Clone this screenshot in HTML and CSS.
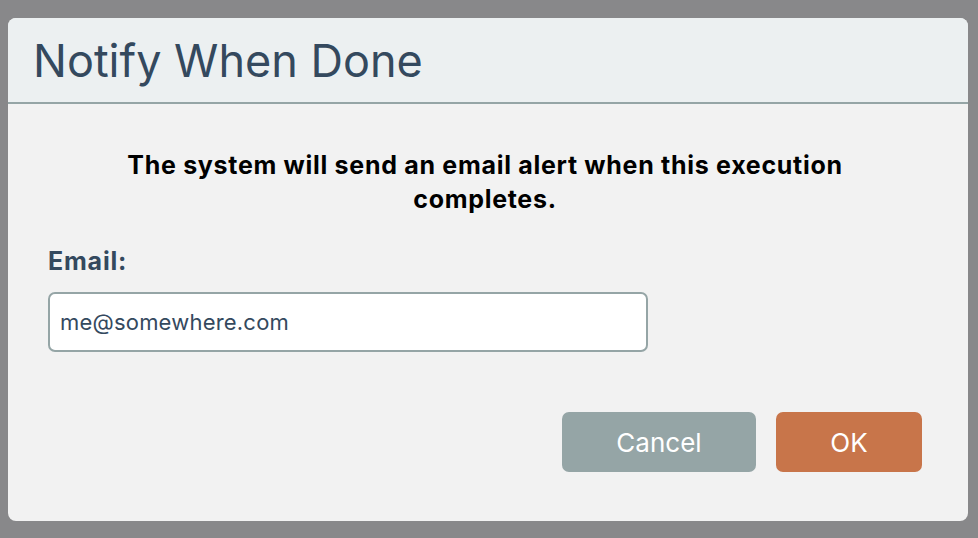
FILE: index.html
```html
<!DOCTYPE html>
<html>
<head>
<meta charset="utf-8">
<link rel="stylesheet" href="styles.css">
</head>
<body>
<div class="dialog">
  <div class="dialog-header">
    <h1 class="title">Notify When Done</h1>
  </div>
  <div class="dialog-body">
    <p class="message">The system will send an email alert when this execution completes.</p>
    <label class="label" for="email">Email:</label>
    <input class="input" id="email" type="text" value="me@somewhere.com">
    <div class="actions">
      <button class="btn btn-cancel">Cancel</button>
      <button class="btn btn-ok">OK</button>
    </div>
  </div>
</div>
</body>
</html>
```
FILE: styles.css
```css
html, body {
  margin: 0;
  padding: 0;
  background: #88888a;
  font-family: Inter, "Open Sans", sans-serif;
}
body {
  padding: 18px 10px 17px 8px;
}
.dialog {
  width: 960px;
  height: 503px;
  background: #f2f2f2;
  border-radius: 8px;
  overflow: hidden;
  display: flex;
  flex-direction: column;
}
.dialog-header {
  background: #ecf0f1;
  height: 84px;
  border-bottom: 2px solid #95a5a6;
  display: flex;
  align-items: center;
  padding-left: 25px;
}
.title {
  margin: 0;
  font-weight: 400;
  font-size: 45px;
  color: #34495e;
  line-height: 1;
}
.dialog-body {
  padding: 44px 46px 0 40px;
  display: flex;
  flex-direction: column;
}
.message {
  margin: 0 40px;
  text-align: center;
  font-weight: 700;
  font-size: 25px;
  letter-spacing: 0.7px;
  line-height: 34px;
  color: #000;
}
.label {
  margin-top: 30px;
  font-weight: 700;
  font-size: 25px;
  letter-spacing: 0.8px;
  line-height: 30px;
  color: #34495e;
}
.input {
  margin-top: 16px;
  width: 600px;
  height: 60px;
  box-sizing: border-box;
  border: 2px solid #95a5a6;
  border-radius: 7px;
  background: #fff;
  padding: 0 10px;
  font-family: inherit;
  font-size: 22px;
  letter-spacing: 0.2px;
  color: #34495e;
}
.actions {
  margin-top: 60px;
  display: flex;
  justify-content: flex-end;
  gap: 20px;
}
.btn {
  height: 60px;
  border: none;
  border-radius: 7px;
  color: #fff;
  font-family: inherit;
  font-size: 26px;
}
.btn-cancel {
  width: 194px;
  background: #95a5a6;
}
.btn-ok {
  width: 146px;
  background: #c8754a;
}
```
